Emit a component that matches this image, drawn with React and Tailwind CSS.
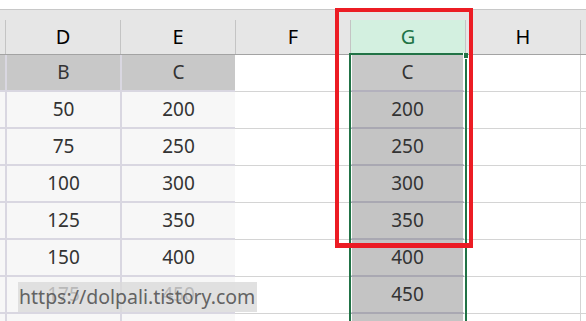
const rows = [
    { d: 'B', e: 'C', g: 'C', head: true },
    { d: '50', e: '200', g: '200' },
    { d: '75', e: '250', g: '250' },
    { d: '100', e: '300', g: '300' },
    { d: '125', e: '350', g: '350' },
    { d: '150', e: '400', g: '400' },
    { d: '175', e: '450', g: '450' },
    { d: '', e: '', g: '' },
];

function ColHeader({ label, active }) {
    return (
        <div
            className={
                'flex h-[34px] w-[115px] shrink-0 items-center justify-center border-l border-[#c4c4c4] ' +
                (active ? 'bg-[#d3f0e0] text-[#217346]' : 'text-black')
            }
        >
            {label}
        </div>
    );
}

function DataRow({ row }) {
    const bg = row.head ? 'bg-[#c8c8c8]' : 'bg-[#f7f7f7]';
    return (
        <div className="flex h-[37px] text-[#333]">
            <div className={`w-[5px] shrink-0 border-b-2 border-[#d9d7e1] ${bg}`} />
            <div className={`flex w-[115px] shrink-0 items-center justify-center border-b-2 border-l-2 border-[#d9d7e1] ${bg}`}>
                {row.d}
            </div>
            <div className={`flex w-[115px] shrink-0 items-center justify-center border-b-2 border-l-2 border-[#d9d7e1] ${bg}`}>
                {row.e}
            </div>
            <div className="w-[115px] shrink-0 border-b border-[#d4d4d4] bg-white" />
            <div
                className={
                    'flex w-[115px] shrink-0 items-center justify-center border-x-2 border-b-2 border-x-white ' +
                    (row.head ? 'border-b-[#b3b1bd] bg-[#c8c8c8]' : 'border-b-[#a9a8b2] bg-[#c4c4c4]')
                }
            >
                {row.g}
            </div>
            <div className="w-[115px] shrink-0 border-b border-[#d4d4d4] bg-white" />
            <div className="w-[6px] shrink-0 border-b border-l border-[#d4d4d4] bg-white" />
        </div>
    );
}

export default function App() {
    return (
        <div className="relative h-[321px] w-[586px] overflow-hidden bg-white font-['Noto_Sans',sans-serif]">
            <div className="h-[9px] bg-white" />

            {/* column headers */}
            <div className="border-y border-t-[#c8c8c8] border-b-[#a3a3a3] bg-[#e6e6e6] pt-[10px] text-[20px]">
                <div className="flex">
                    <div className="w-[5px] shrink-0" />
                    <ColHeader label="D" />
                    <ColHeader label="E" />
                    <ColHeader label="F" />
                    <ColHeader label="G" active />
                    <ColHeader label="H" />
                    <div className="h-[34px] w-[6px] shrink-0 border-l border-[#c4c4c4]" />
                </div>
            </div>

            {/* cells */}
            <div className="text-[19px]">
                {rows.map((row, i) => (
                    <DataRow key={i} row={row} />
                ))}
            </div>

            {/* selection */}
            <div className="absolute left-[349px] top-[53px] h-[300px] w-[118px] border-2 border-b-0 border-[#217346]" />
            <div className="absolute left-[463px] top-[53px] h-[6px] w-[5px] border-b border-l border-white bg-[#217346]" />

            {/* highlight box */}
            <div className="absolute left-[335px] top-[8px] h-[240px] w-[138px] border-4 border-b-[5px] border-[#ec1c24]" />

            {/* watermark */}
            <div className="absolute left-[18px] top-[282px] flex h-[30px] w-[239px] items-center whitespace-nowrap bg-[#d9d9d9]/80 pl-[1px] text-[19.5px] text-[#636363]">
                https://dolpali.tistory.com
            </div>
        </div>
    );
}
